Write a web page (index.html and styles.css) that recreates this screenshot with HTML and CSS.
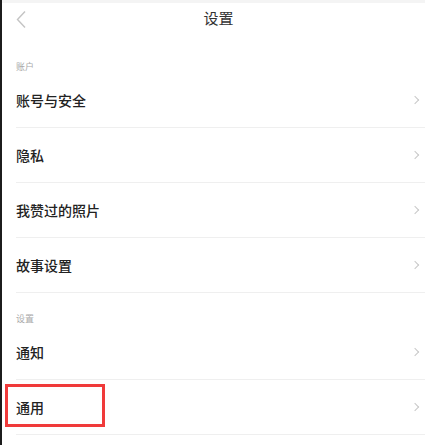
FILE: index.html
```html
<!DOCTYPE html>
<html lang="zh-CN">
<head>
    <meta charset="UTF-8">
    <meta name="viewport" content="width=device-width, initial-scale=1.0">
    <title>设置</title>
    <link rel="stylesheet" href="styles.css">
</head>
<body>
    <main class="page">
        <header class="nav-bar">
            <span class="back">
                <svg width="10" height="17" viewBox="0 0 10 17"><polyline points="9,0.5 1.5,8.5 9,16.5" fill="none" stroke="#c4c4c4" stroke-width="1.4"/></svg>
            </span>
            <h1>设置</h1>
        </header>

        <div class="section-title">账户</div>
        <ul class="menu">
            <li class="menu-item"><span>账号与安全</span><i class="arrow"></i></li>
            <li class="menu-item"><span>隐私</span><i class="arrow"></i></li>
            <li class="menu-item"><span>我赞过的照片</span><i class="arrow"></i></li>
            <li class="menu-item"><span>故事设置</span><i class="arrow"></i></li>
        </ul>

        <div class="section-title">设置</div>
        <ul class="menu">
            <li class="menu-item"><span>通知</span><i class="arrow"></i></li>
            <li class="menu-item highlighted"><span>通用</span><i class="arrow"></i></li>
        </ul>
    </main>
</body>
</html>
```

FILE: styles.css
```css
body {
    margin: 0;
    padding: 0;
    background-color: #fff;
    font-family: "Noto Sans CJK SC", "Noto Sans", sans-serif;
    overflow: hidden;
}
.page {
    position: relative;
    min-height: 445px;
    border-left: 2px solid #1c1c1c;
    background-color: #fff;
}
.nav-bar {
    position: relative;
    height: 38px;
    border-top: 3px solid #f4f4f4;
    display: flex;
    justify-content: center;
}
.nav-bar h1 {
    margin: 0;
    font-size: 15px;
    font-weight: 400;
    line-height: 30px;
    color: #333;
    padding-left: 10px;
}
.back {
    position: absolute;
    left: 14px;
    top: 8px;
    display: flex;
}
.section-title {
    padding: 20px 0 0 14px;
    height: 12px;
    font-size: 9px;
    line-height: 12px;
    color: #aaa;
}
.menu {
    list-style: none;
    margin: 0;
    padding: 0 0 0 14px;
}
.menu-item {
    position: relative;
    height: 54px;
    display: flex;
    align-items: center;
    justify-content: space-between;
    border-bottom: 1px solid #efefef;
    font-size: 14px;
    font-weight: 500;
    color: #222;
    padding-right: 7px;
}
.arrow {
    width: 5px;
    height: 5px;
    border-top: 1.3px solid #c8c8c8;
    border-right: 1.3px solid #c8c8c8;
    transform: rotate(45deg);
}
.highlighted::before {
    content: "";
    position: absolute;
    left: -11px;
    top: 4px;
    width: 94px;
    height: 37px;
    border: 3px solid #f03a3a;
}
```
